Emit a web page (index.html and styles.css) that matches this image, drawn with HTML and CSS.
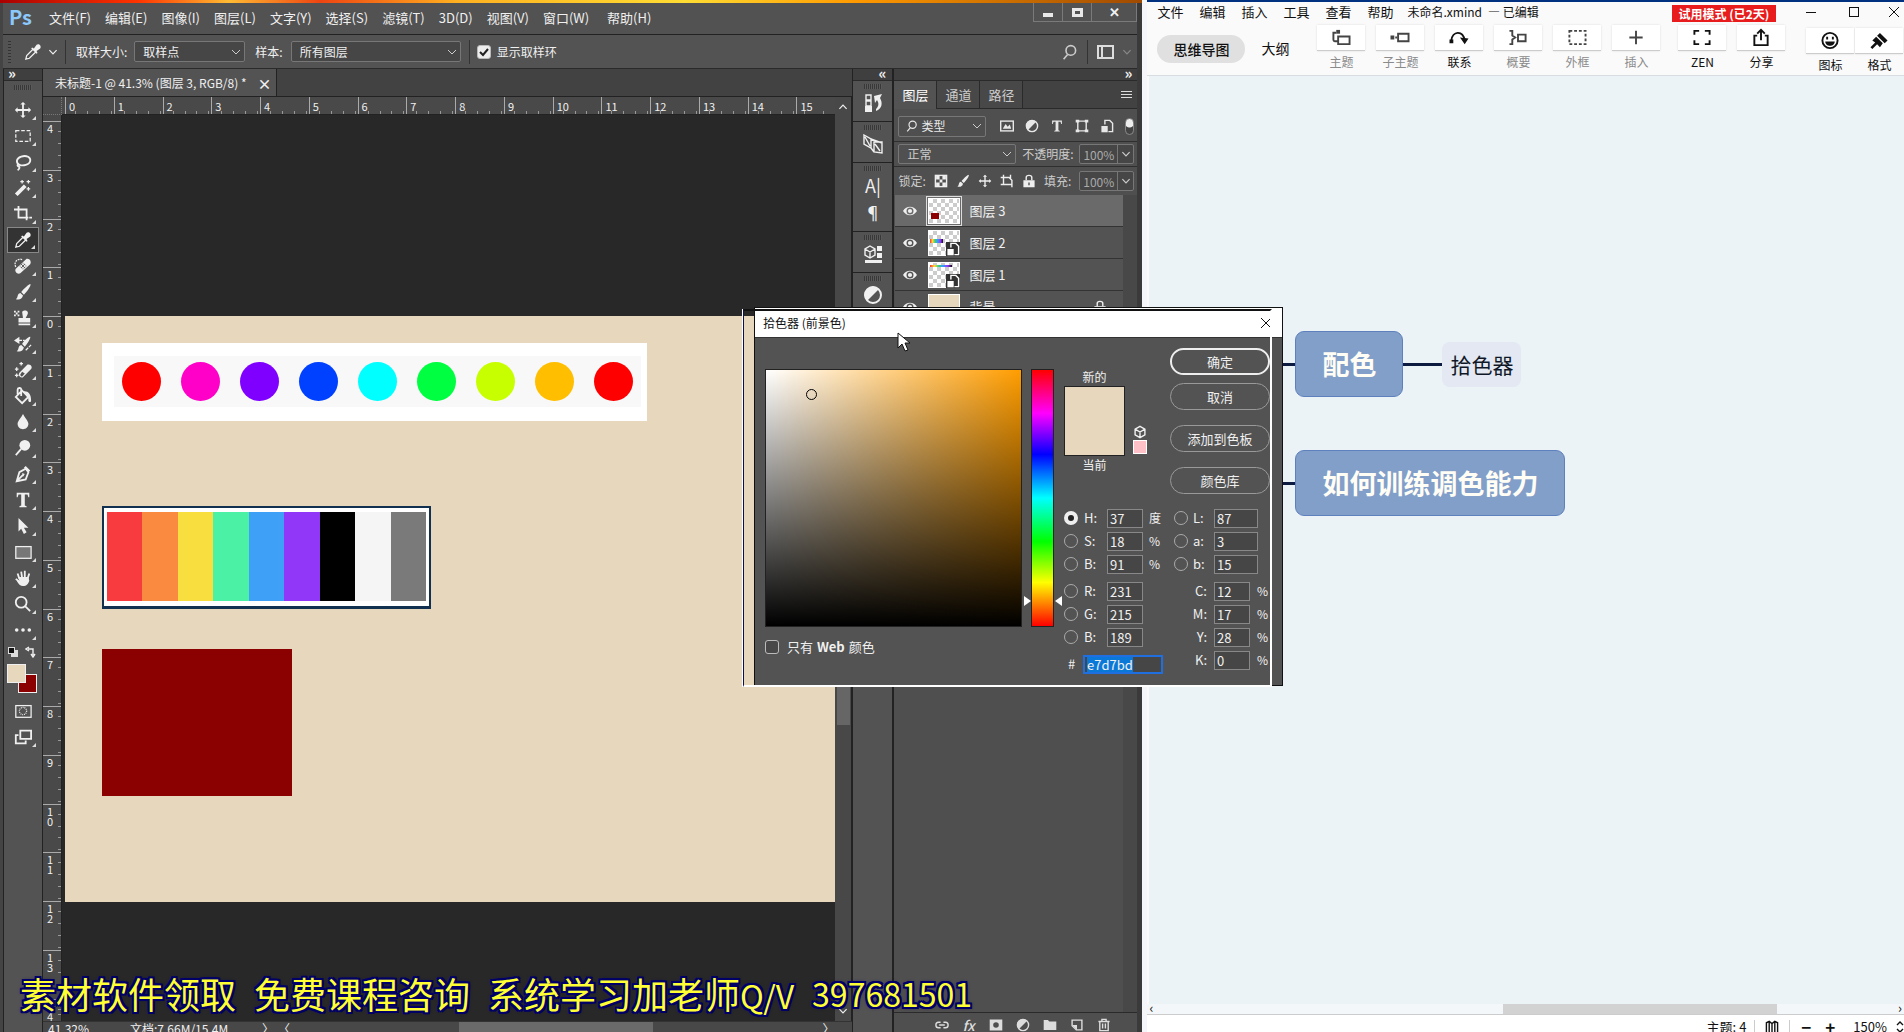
FILE: index.html
```html
<!DOCTYPE html>
<html lang="zh-CN">
<head>
<meta charset="utf-8">
<title>Ps 拾色器</title>
<link rel="stylesheet" href="styles.css">
</head>
<body>
<svg class="defs" aria-hidden="true">
  <symbol id="move" viewBox="0 0 20 20"><path class="f" d="M10 1l3 3h-2v5h5V7l3 3-3 3v-2h-5v5h2l-3 3-3-3h2v-5H4v2l-3-3 3-3v2h5V4H7z"/></symbol>
  <symbol id="marquee" viewBox="0 0 20 20"><rect class="s" x="2" y="4" width="16" height="12" stroke-dasharray="4 2"/></symbol>
  <symbol id="lasso" viewBox="0 0 20 20"><path class="s w" d="M6 13C2 11 2 6 8 4s11 1 10 5-8 6-12 4c-2-1-3 1-1 2 2 0 1 3-1 4"/></symbol>
  <symbol id="wand" viewBox="0 0 20 20"><path class="f" d="M1 16L11 6l3 3L4 19z"/><path class="s" d="M9 1v4M7 3h4M16 1v4M14 3h4M16 9v4M14 11h4"/></symbol>
  <symbol id="crop" viewBox="0 0 20 20"><path class="s w" d="M0 5h14v12M5 1v13h11M17 14h3"/></symbol>
  <symbol id="dropper" viewBox="0 0 20 20"><path class="s" d="M10 7L3 14l-1 4 4-1 7-7"/><path class="f" d="M8 6l1-1 2 1 3-4c2-2 6 1 4 4l-4 3 1 2-1 1z"/></symbol>
  <symbol id="heal" viewBox="0 0 20 20"><path class="s" d="M2 11C-1 5 5 1 9 3" stroke-dasharray="2 1"/><path class="f" fill-rule="evenodd" d="M2 13L14 2c3-1 6 3 4 6L7 18c-3 2-7-2-5-5zM6 10l4 4 4-4-4-4z"/><path class="f" d="M9 7h2v2H9zM9 11h2v2H9zM7 9h2v2H7zM11 9h2v2h-2z"/></symbol>
  <symbol id="brush" viewBox="0 0 20 20"><path class="f" d="M18 1c2 1-4 9-7 12l-3-3C11 6 17 1 18 1zM7 11l3 3c-1 4-4 5-8 4 3-2 1-6 5-7z"/></symbol>
  <symbol id="stamp" viewBox="0 0 20 20"><path class="f" d="M9 3c3-3 8-1 6 3l-2 4h5v5H5v-5h5zM5 16h13v2H5zM0 2h2v2H0zM4 2h2v2H4zM2 4h2v2H2zM0 6h2v2H0zM4 6h2v2H4z"/></symbol>
  <symbol id="history" viewBox="0 0 20 20"><path class="f" d="M18 2c1 1-3 8-6 11l-3-3c2-4 8-9 9-8zM8 11l3 3c-1 4-4 5-8 4 3-2 1-6 5-7zM0 6l6-4v8z"/><path class="s" d="M5 6h7M13 17l6-6" stroke-dasharray="4 1"/></symbol>
  <symbol id="eraser" viewBox="0 0 20 20"><path class="f" fill-rule="evenodd" d="M6 13l9-9c3-1 6 2 4 5l-9 9c-3 1-6-2-4-5zm1 2c0 2 2 3 3 1l2-2-3-2z"/><path class="s" d="M3 7v4M1 9h4M8 1v4M6 3h4M3 14v4M1 16h4"/></symbol>
  <symbol id="bucket" viewBox="0 0 20 20"><path class="s w" d="M9 4l7 7-7 7-7-7zM8 10V3c0-3-4-2-4 0v5"/><path class="f" d="M10 5c5-1 9 2 9 10 0 3-4 2-3-2z"/></symbol>
  <symbol id="drop" viewBox="0 0 20 20"><path class="f" d="M10 1c2 4 6 8 6 11 0 8-12 8-12 0 0-3 4-7 6-11z"/></symbol>
  <symbol id="dodge" viewBox="0 0 20 20"><circle class="f" cx="12" cy="7" r="6"/><path class="s w" d="M8 11l-6 7"/></symbol>
  <symbol id="pen" viewBox="0 0 20 20"><path class="s w" d="M3 18L6 8l7-4 3 4-3 8zM3 18l7-7"/><path class="f" d="M13 1l5 5-2 2-5-5zM9 9l3 1-2 3z"/></symbol>
  <symbol id="type" viewBox="0 0 20 20"><path class="f" d="M3 2h14v5h-1l-1-3h-3v12l2 1v1H6v-1l2-1V4H5L4 7H3z"/></symbol>
  <symbol id="arrow" viewBox="0 0 20 20"><path class="f" d="M5 1l11 11h-5l3 5-3 2-3-6-3 3z"/></symbol>
  <symbol id="rect" viewBox="0 0 20 20"><rect x="2" y="4" width="17" height="13" fill="#777"/><rect class="s" x="2" y="4" width="17" height="13"/></symbol>
  <symbol id="hand" viewBox="0 0 20 20"><path class="s w" d="M6 11L4 5M9 10L8 3M12 10V2M15 11l2-6M7 15l-5-4"/><path class="f" d="M5 9h11l1 4c-1 3-3 6-7 6-3 0-5-2-7-6l3 1z"/></symbol>
  <symbol id="zoom" viewBox="0 0 20 20"><circle class="s w" cx="8" cy="8" r="6"/><path class="s w" d="M12 12l6 6"/></symbol>
  <symbol id="dots" viewBox="0 0 20 20"><circle class="f" cx="3" cy="10" r="2"/><circle class="f" cx="10" cy="10" r="2"/><circle class="f" cx="17" cy="10" r="2"/></symbol>
  <symbol id="mask" viewBox="0 0 20 20"><rect class="s" x="2" y="4" width="17" height="13"/><circle class="s" cx="10" cy="10" r="4" stroke-dasharray="1 1"/></symbol>
  <symbol id="screens" viewBox="0 0 20 20"><path class="s w" d="M7 3h12v9H7zM5 8H2v9h11v-3"/></symbol>
  <symbol id="down" viewBox="0 0 20 20"><path class="s w" d="M4 7l6 6 6-6"/></symbol>
  <symbol id="search" viewBox="0 0 20 20"><circle class="s w" cx="11" cy="8" r="6"/><path class="s w" d="M7 13l-5 6"/></symbol>
  <symbol id="eye" viewBox="0 0 20 20"><path class="f" fill-rule="evenodd" d="M0 10c5-8 15-8 20 0-5 8-15 8-20 0zm10-5a5 5 0 100 10 5 5 0 000-10z"/><circle class="f" cx="10" cy="10" r="3"/></symbol>
  <symbol id="pic" viewBox="0 0 20 20"><rect class="s w" x="1" y="3" width="18" height="14"/><path class="f" d="M4 14l4-7 3 4 3-3 2 6z"/></symbol>
  <symbol id="half" viewBox="0 0 20 20"><circle class="s w" cx="10" cy="10" r="8"/><path class="f" d="M16 4A8 8 0 104 16z"/></symbol>
  <symbol id="shape" viewBox="0 0 20 20"><path class="s w" d="M4 3h12v14H4z"/><path class="f" d="M1 1h5v4H1zM14 1h5v4h-5zM1 15h5v4H1zM14 15h5v4h-5z"/></symbol>
  <symbol id="smart" viewBox="0 0 20 20"><path class="s w" d="M7 8V2h7l4 4v12h-6"/><path class="f" d="M2 10h9v9H2z"/></symbol>
  <symbol id="checker" viewBox="0 0 20 20"><rect class="s w" x="2" y="2" width="16" height="16"/><path class="f" d="M3 3h5v5H3zM12 3h5v5h-5zM8 8h4v4H8zM3 12h5v5H3zM12 12h5v5h-5z"/></symbol>
  <symbol id="artb" viewBox="0 0 20 20"><path class="s w" d="M1 5h12l4 4v6H5V1M15 1v5M17 15v4M1 15h4"/></symbol>
  <symbol id="lock" viewBox="0 0 20 20"><path class="f" fill-rule="evenodd" d="M2 9h16v10H2zm7 3v4h2v-4z"/><path class="s w" d="M6 9V5c0-4 8-4 8 0v4"/></symbol>
  <symbol id="link" viewBox="0 0 20 20"><path class="s w" d="M8 6H5c-5 0-5 8 0 8h3M12 6h3c5 0 5 8 0 8h-3M6 10h8"/></symbol>
  <symbol id="folder" viewBox="0 0 20 20"><path class="f" d="M1 3h6l2 2h10v12H1z"/></symbol>
  <symbol id="newl" viewBox="0 0 20 20"><path class="s w" d="M3 3h14v14h-8l-6-6z"/><path class="f" d="M3 10h7v7z"/></symbol>
  <symbol id="trash" viewBox="0 0 20 20"><path class="s w" d="M2 5h16M7 4V2h6v2M4 5v13h12V5M8 8v7M12 8v7"/></symbol>
  <symbol id="maskb" viewBox="0 0 20 20"><path class="f" fill-rule="evenodd" d="M1 2h18v16H1zm9 4a4 4 0 100 8 4 4 0 000-8z"/></symbol>
  <symbol id="hist" viewBox="0 0 20 20"><path class="s" d="M3 2h5v5H3zM3 8h5v5H3z"/><path class="f" d="M2 13h7v6H2zM11 3l8-2-2 4c3 5 2 11-4 13v-2c3-3 3-6 1-9l-2 3z"/></symbol>
  <symbol id="swap" viewBox="0 0 20 20"><path class="s" d="M1 1l7 4v9l-7-4zM11 8h8v11l-8-1zM12 10l5 7M2 3l5 9M8 5l11 4M8 14l3 4"/></symbol>
  <symbol id="lib" viewBox="0 0 20 20"><path class="s" d="M7 2l5 3v6l-5 3-5-3V5zM2 5l5 3 5-3M7 8v6"/><path class="f" d="M14 2h5v5h-5zM14 9h5v5h-5zM2 16h17v3H2z"/></symbol>
  <symbol id="cube" viewBox="0 0 20 20"><path class="s w" d="M10 2l7 4v8l-7 4-7-4V6zM3 6l7 4 7-4M10 10v8"/></symbol>
  <symbol id="topic" viewBox="0 0 20 20"><path class="s w" d="M7 9h12v8H7zM2 4v8c0 2 1 2 4 2M2 5h3"/><path class="f" d="M5 2h4v4H5z"/></symbol>
  <symbol id="subtopic" viewBox="0 0 20 20"><path class="s w" d="M8 6h11v8H8z"/><path class="f" d="M0 8h4v4H0zM5 9h2v2H5z"/></symbol>
  <symbol id="relate" viewBox="0 0 20 20"><path class="s w" d="M2 13C3 3 14 2 16 13"/><path class="f" d="M0 12h4v4H0zM11 10l9 1-4 6z"/></symbol>
  <symbol id="summary" viewBox="0 0 20 20"><path class="s w" d="M1 3h3v5l3 2-3 2v5H1M10 7h8v7h-8z"/></symbol>
  <symbol id="bound" viewBox="0 0 20 20"><rect class="s w" x="2" y="3" width="17" height="14" stroke-dasharray="3 2"/></symbol>
  <symbol id="plus" viewBox="0 0 20 20"><path class="s w" d="M10 3v14M3 10h14"/></symbol>
  <symbol id="zen" viewBox="0 0 20 20"><path class="s w" d="M2 7V3h5M13 3h5v4M18 13v4h-5M7 17H2v-4"/></symbol>
  <symbol id="share" viewBox="0 0 20 20"><path class="s w" d="M6 8H3v10h14V8h-3M10 13V2M6 6l4-4 4 4"/></symbol>
  <symbol id="smile" viewBox="0 0 20 20"><circle class="s w" cx="10" cy="10" r="8"/><path class="f" d="M6 6h2v3H6zM12 6h2v3h-2zM5 11h10c0 6-10 6-10 0z"/></symbol>
  <symbol id="paint" viewBox="0 0 20 20"><path class="f" d="M11 2l8 8-3 3-8-8zM7 6l7 7-3 4-3-3-5 5-2-2 5-5-3-2z"/></symbol>
  <symbol id="book" viewBox="0 0 20 20"><path class="s w" d="M2 18V4l4-2 4 3 4-3 4 2v14M10 5v13M6 3v15M14 3v15"/></symbol>
</svg>

<div class="desktop">
<main class="ps">
  <header class="menubar">
    <span class="logo">Ps</span>
    <nav class="menus"><a href="#">文件(F)</a><a href="#">编辑(E)</a><a href="#">图像(I)</a><a href="#">图层(L)</a><a href="#">文字(Y)</a><a href="#">选择(S)</a><a href="#">滤镜(T)</a><a href="#">3D(D)</a><a href="#">视图(V)</a><a href="#">窗口(W)</a><a href="#">帮助(H)</a></nav>
    <div class="winbtns"><button aria-label="最小化"><i class="g-min"></i></button><button aria-label="最大化"><i class="g-max"></i></button><button aria-label="关闭">✕</button></div>
  </header>

  <div class="options">
    <i class="vgrip"></i>
    <svg class="i20"><use href="#dropper"/></svg>
    <svg class="i12"><use href="#down"/></svg>
    <i class="vsep"></i>
    <label for="size">取样大小:</label>
    <select id="size" class="sel size"><option>取样点</option></select>
    <label for="sample">样本:</label>
    <select id="sample" class="sel sample"><option>所有图层</option></select>
    <i class="vsep"></i>
    <label class="ring"><input type="checkbox" checked>显示取样环</label>
    <span class="grow"></span>
    <svg class="i16 dim"><use href="#search"/></svg>
    <i class="vsep"></i>
    <i class="workspace"></i>
    <svg class="i12 faint"><use href="#down"/></svg>
  </div>

  <div class="work">
    <aside class="tools">
      <div class="dockhead"><span>»</span></div>
      <i class="hgrip"></i>
      <button aria-label="移动"><svg><use href="#move"/></svg></button>
      <button aria-label="选框"><svg><use href="#marquee"/></svg></button>
      <button aria-label="套索"><svg><use href="#lasso"/></svg></button>
      <button aria-label="魔棒"><svg><use href="#wand"/></svg></button>
      <button aria-label="裁剪"><svg><use href="#crop"/></svg></button>
      <button aria-label="吸管" class="on"><svg><use href="#dropper"/></svg></button>
      <button aria-label="修复"><svg><use href="#heal"/></svg></button>
      <button aria-label="画笔"><svg><use href="#brush"/></svg></button>
      <button aria-label="图章"><svg><use href="#stamp"/></svg></button>
      <button aria-label="历史画笔"><svg><use href="#history"/></svg></button>
      <button aria-label="橡皮擦"><svg><use href="#eraser"/></svg></button>
      <button aria-label="油漆桶"><svg><use href="#bucket"/></svg></button>
      <button aria-label="模糊"><svg><use href="#drop"/></svg></button>
      <button aria-label="减淡"><svg><use href="#dodge"/></svg></button>
      <button aria-label="钢笔"><svg><use href="#pen"/></svg></button>
      <button aria-label="文字"><svg><use href="#type"/></svg></button>
      <button aria-label="路径选择"><svg><use href="#arrow"/></svg></button>
      <button aria-label="矩形"><svg><use href="#rect"/></svg></button>
      <button aria-label="抓手"><svg><use href="#hand"/></svg></button>
      <button aria-label="缩放"><svg><use href="#zoom"/></svg></button>
      <button aria-label="更多"><svg><use href="#dots"/></svg></button>
      <div class="colorset">
        <i class="mini"></i>
        <svg class="flip" viewBox="0 0 12 12"><path class="s" d="M3 3h5v6M4 1L1 3l3 2M6 8l2 3 2-3"/></svg>
        <i class="bg"></i><i class="fg"></i>
      </div>
      <button aria-label="快速蒙版" class="plain"><svg><use href="#mask"/></svg></button>
      <button aria-label="屏幕模式"><svg><use href="#screens"/></svg></button>
    </aside>

    <section class="doc">
      <div class="tabs"><div class="tab"><span>未标题-1 @ 41.3% (图层 3, RGB/8) *</span><b>×</b></div></div>
      <i class="corner"></i>
      <div class="hruler"><span>0</span><span>1</span><span>2</span><span>3</span><span>4</span><span>5</span><span>6</span><span>7</span><span>8</span><span>9</span><span>10</span><span>11</span><span>12</span><span>13</span><span>14</span><span class="part">15</span></div>
      <div class="vscroll"><svg class="i12 up"><use href="#down"/></svg><i class="thumb"></i><svg class="i12"><use href="#down"/></svg></div>
      <div class="vruler"><span>4</span><span>3</span><span>2</span><span>1</span><span>0</span><span>1</span><span>2</span><span>3</span><span>4</span><span>5</span><span>6</span><span>7</span><span>8</span><span>9</span><span>1<br>0</span><span>1<br>1</span><span>1<br>2</span><span>1<br>3</span><span class="part">1<br>4</span></div>
      <div class="canvas">
        <div class="artboard">
          <div class="wheel"><div><i class="c1"></i><i class="c2"></i><i class="c3"></i><i class="c4"></i><i class="c5"></i><i class="c6"></i><i class="c7"></i><i class="c8"></i><i class="c1"></i></div></div>
          <div class="palette"><i class="p1"></i><i class="p2"></i><i class="p3"></i><i class="p4"></i><i class="p5"></i><i class="p6"></i><i class="p7"></i><i class="p8"></i><i class="p9"></i></div>
          <div class="red"></div>
        </div>
      </div>
      <footer class="status"><span class="pct">41.32%</span><span class="size">文档:7.66M/15.4M</span><span class="more">〉</span><span class="back">〈</span><i></i><span>〉</span></footer>
    </section>

    <aside class="icondock">
      <div class="dockhead"><span>«</span></div>
      <div class="cell"><i class="hgrip"></i><svg class="i20"><use href="#hist"/></svg></div>
      <div class="cell"><i class="hgrip"></i><svg class="i20"><use href="#swap"/></svg></div>
      <div class="cell tall"><i class="hgrip"></i><span>A|</span><span>¶</span></div>
      <div class="cell"><i class="hgrip"></i><svg class="i20"><use href="#lib"/></svg></div>
      <div class="cell last"><i class="hgrip"></i><svg class="i20"><use href="#half"/></svg></div>
    </aside>

    <aside class="layers">
      <div class="dockhead end"><span>»</span></div>
      <div class="ptabs"><button class="on">图层</button><button>通道</button><button>路径</button><i class="burger"></i></div>
      <div class="filter">
        <label class="kind"><svg class="i12"><use href="#search"/></svg><select class="sel" aria-label="类型"><option>类型</option></select></label>
        <svg class="i14"><use href="#pic"/></svg><svg class="i14"><use href="#half"/></svg><svg class="i14"><use href="#type"/></svg><svg class="i14"><use href="#shape"/></svg><svg class="i14"><use href="#smart"/></svg>
        <i class="toggle"></i>
      </div>
      <div class="blend">
        <select class="sel mode" aria-label="混合模式"><option>正常</option></select>
        <label for="opa">不透明度:</label>
        <span class="num"><input id="opa" value="100%"><svg class="i12"><use href="#down"/></svg></span>
      </div>
      <div class="locks">
        <span>锁定:</span>
        <svg class="i14"><use href="#checker"/></svg><svg class="i14"><use href="#brush"/></svg><svg class="i14"><use href="#move"/></svg><svg class="i14"><use href="#artb"/></svg><svg class="i14"><use href="#lock"/></svg>
        <label for="fill">填充:</label>
        <span class="num"><input id="fill" value="100%"><svg class="i12"><use href="#down"/></svg></span>
      </div>
      <ul>
        <li class="on"><svg class="i14"><use href="#eye"/></svg><i class="th t3"></i><span>图层 3</span></li>
        <li><svg class="i14"><use href="#eye"/></svg><i class="th t2"><svg class="i14"><use href="#smart"/></svg></i><span>图层 2</span></li>
        <li><svg class="i14"><use href="#eye"/></svg><i class="th t1"><svg class="i14"><use href="#smart"/></svg></i><span>图层 1</span></li>
        <li><svg class="i14"><use href="#eye"/></svg><i class="th t0"></i><span>背景</span><svg class="i14 lk"><use href="#lock"/></svg></li>
      </ul>
      <footer><svg class="i14"><use href="#link"/></svg><em>fx</em><svg class="i14"><use href="#maskb"/></svg><svg class="i14"><use href="#half"/></svg><svg class="i14"><use href="#folder"/></svg><svg class="i14"><use href="#newl"/></svg><svg class="i14"><use href="#trash"/></svg></footer>
    </aside>
  </div>
</main>

<section class="xmind">
  <header>
    <div class="xmenu"><a href="#">文件</a><a href="#">编辑</a><a href="#">插入</a><a href="#">工具</a><a href="#">查看</a><a href="#">帮助</a><span class="name">未命名.xmind</span><span class="edited">— 已编辑</span><span class="trial">试用模式 (已2天)</span><button class="wb" aria-label="最小化"><i class="x-min"></i></button><button class="wb" aria-label="最大化"><i class="x-max"></i></button><button class="wb x" aria-label="关闭"><svg class="i12" viewBox="0 0 12 12"><path d="M1 1l10 10M11 1L1 11" stroke="currentColor"/></svg></button></div>
    <div class="xbar">
      <button class="pill">思维导图</button><button class="outline">大纲</button>
      <button class="tb off"><svg><use href="#topic"/></svg>主题</button>
      <button class="tb off"><svg><use href="#subtopic"/></svg>子主题</button>
      <button class="tb"><svg><use href="#relate"/></svg>联系</button>
      <button class="tb off"><svg><use href="#summary"/></svg>概要</button>
      <button class="tb off"><svg><use href="#bound"/></svg>外框</button>
      <button class="tb off"><svg><use href="#plus"/></svg>插入</button>
      <button class="tb zen"><svg><use href="#zen"/></svg>ZEN</button>
      <button class="tb"><svg><use href="#share"/></svg>分享</button>
      <div class="pair"><button class="tb"><svg><use href="#smile"/></svg>图标</button><button class="tb"><svg><use href="#paint"/></svg>格式</button></div>
    </div>
  </header>
  <div class="map">
    <i class="line l1"></i><i class="line l2"></i><i class="line l3"></i>
    <div class="node n1">配色</div><div class="leaf">拾色器</div><div class="node n2">如何训练调色能力</div>
  </div>
  <div class="xscroll"><span>‹</span><i></i><span>›</span></div>
  <footer class="xstatus"><span>主题: 4</span><i></i><svg class="i20"><use href="#book"/></svg><i></i><button aria-label="缩小">−</button><button aria-label="放大">+</button><span class="pc">150%</span><svg class="ud" viewBox="0 0 8 14"><path class="s" d="M1 5l3-3 3 3M1 9l3 3 3-3"/></svg></footer>
</section>
</div>

<form class="dialog">
  <div class="title"><span>拾色器 (前景色)</span><button type="button" aria-label="关闭"><svg class="i12" viewBox="0 0 12 12"><path d="M1 1l10 10M11 1L1 11" stroke="currentColor"/></svg></button></div>
  <div class="body">
    <div class="left">
      <div class="spectrum"><i></i></div>
      <label class="web"><input type="checkbox">只有 <b>Web</b> 颜色</label>
    </div>
    <div class="hue"><i></i><i class="r"></i></div>
    <div class="right">
      <div class="upper">
        <div class="preview"><span>新的</span><i></i><span>当前</span></div>
        <div class="warn"><svg class="i14"><use href="#cube"/></svg><i></i></div>
        <div class="btns"><button type="button" class="ok">确定</button><button type="button">取消</button><button type="button" class="gap">添加到色板</button><button type="button" class="gap">颜色库</button></div>
      </div>
      <div class="values">
        <div class="col">
          <div><input type="radio" name="ch" id="rh" checked><label for="rh">H:</label><input class="v" aria-label="H" value="37"><span>度</span></div>
          <div><input type="radio" name="ch" id="rs"><label for="rs">S:</label><input class="v" aria-label="S" value="18"><span>%</span></div>
          <div><input type="radio" name="ch" id="rv"><label for="rv">B:</label><input class="v" aria-label="B" value="91"><span>%</span></div>
          <div class="sp"><input type="radio" name="ch" id="rr"><label for="rr">R:</label><input class="v" aria-label="R" value="231"></div>
          <div><input type="radio" name="ch" id="rg"><label for="rg">G:</label><input class="v" aria-label="G" value="215"></div>
          <div><input type="radio" name="ch" id="rb"><label for="rb">B:</label><input class="v" aria-label="蓝" value="189"></div>
          <div class="sp hex"><label for="hex">#</label><input class="v" id="hex" value="e7d7bd"></div>
        </div>
        <div class="col two">
          <div><input type="radio" name="ch" id="rl"><label for="rl">L:</label><input class="v wide" aria-label="L" value="87"></div>
          <div><input type="radio" name="ch" id="ra"><label for="ra">a:</label><input class="v wide" aria-label="a" value="3"></div>
          <div><input type="radio" name="ch" id="rlb"><label for="rlb">b:</label><input class="v wide" aria-label="b" value="15"></div>
          <div class="sp"><label for="ic">C:</label><input class="v" id="ic" value="12"><span>%</span></div>
          <div><label for="im">M:</label><input class="v" id="im" value="17"><span>%</span></div>
          <div><label for="iy">Y:</label><input class="v" id="iy" value="28"><span>%</span></div>
          <div><label for="ik">K:</label><input class="v" id="ik" value="0"><span>%</span></div>
        </div>
      </div>
    </div>
  </div>
</form>
<div class="ghost"></div>
<svg class="cursor" viewBox="0 0 14 20"><path d="M1 1v15l4-4 3 7 3-1-3-7h5z"/></svg>
<div class="caption"><span>素材软件领取</span><span>免费课程咨询</span><span>系统学习加老师<small>Q/V</small></span><small>397681501</small></div>
</body>
</html>
```
FILE: styles.css
```css
* { box-sizing: border-box; }
body { margin: 0; font: 13px/16px "Noto Sans CJK SC", sans-serif; color: #f0f0f0; overflow: hidden; background: #4f4f4f; }
button, input, select { font: inherit; color: inherit; margin: 0; padding: 0; border: 0; background: none; border-radius: 0; }
a { color: inherit; text-decoration: none; }
i { display: block; font-style: normal; flex: none; }
svg { flex: none; display: block; }
.defs { position: absolute; width: 0; height: 0; }
.s { fill: none; stroke: currentColor; stroke-width: 1.4; }
.w { stroke-width: 2; }
.f { fill: currentColor; }
.i20 { width: 20px; height: 20px; }
.i16 { width: 16px; height: 16px; }
.i14 { width: 14px; height: 14px; }
.i12 { width: 12px; height: 12px; }
.dim { color: #ccc; }
.faint { color: #888; }
.grow { flex: 1; }

.desktop { display: grid; grid-template-columns: 3fr 2fr; height: 100vh; }
.ps { display: flex; flex-direction: column; min-width: 0; min-height: 0; background: #4f4f4f; border-right: 5px solid #3a3a3a; border-left: 3px solid #444; white-space: nowrap; }
.ps::before { content: ""; height: 3px; margin: 0 -5px 0 -3px; background: linear-gradient(90deg, #a00, #f30 12%, #fb3 20%, #e41 28%, #ffb020 40%, #fd3 60%, #f90 75%, #a04a00); flex: none; }

.menubar { display: flex; height: 31px; align-items: center; padding-left: 6px; background: #525252; flex: none; }
.logo { font: bold 20px/24px "Noto Sans CJK SC", sans-serif; color: #8cc8fa; width: 40px; margin-top: -4px; }
.menus { display: flex; gap: 14px; flex: 1; margin-top: -1px; }
.menus a:nth-child(10) { margin-right: 4px; }
.winbtns { display: flex; align-self: flex-start; height: 19px; border: 1px solid #7a7a7a; border-top: 0; }
.winbtns button { width: 29px; display: grid; place-items: center; border-right: 1px solid #7a7a7a; line-height: 18px; }
.winbtns button:last-child { width: 44px; border: 0; font-weight: bold; }
.g-min { width: 10px; height: 4px; background: #e8e8e8; margin-top: 6px; }
.g-max { width: 11px; height: 9px; border: 3px solid #e8e8e8; }

.options { display: flex; align-items: center; height: 35px; border-top: 1px solid #222; border-bottom: 1px solid #2a2a2a; padding: 0 4px 0 5px; font-size: 12px; flex: none; background: #535353; }
.options label { margin: 0 5px 0 10px; }
.options .i20 { width: 18px; height: 18px; margin: 0 5px 0 13px; }
.options .i12 { margin-right: 6px; }
.vgrip { width: 3px; height: 22px; background: repeating-linear-gradient(#333 0 1px, #555 1px 3px); }
.vsep { width: 1px; height: 24px; background: #333; }
.sel { appearance: none; border: 1px solid #777; border-radius: 2px; height: 21px; padding: 0 8px; background: #464646 url("data:image/svg+xml,%3Csvg xmlns='http://www.w3.org/2000/svg' width='10' height='8'%3E%3Cpath d='M1 2l4 4 4-4' fill='none' stroke='%23ccc'/%3E%3C/svg%3E") no-repeat right 3px center; }
.options .sel.size { width: 111px; margin-left: 2px; }
.options .sel.sample { width: 170px; margin: 0 8px 0 3px; }
.options .ring { display: flex; align-items: center; gap: 6px; margin-left: 7px; }
.ring input, .web input { appearance: none; width: 14px; height: 14px; border: 1px solid #bbb; border-radius: 3px; }
.ring input { background: #eee url("data:image/svg+xml,%3Csvg xmlns='http://www.w3.org/2000/svg' width='12' height='12'%3E%3Cpath d='M2 6l3 3 5-6' fill='none' stroke='%23222' stroke-width='2'/%3E%3C/svg%3E") center; }
.options .i16 { margin-right: 9px; }
.workspace { width: 17px; height: 14px; margin: 0 7px 0 9px; border: 2px solid #ddd; background: linear-gradient(90deg, #535353 2px, #ddd 2px 4px, #535353 4px); }
.options .faint { margin-right: 0; }

.work { display: flex; flex: 1; min-height: 0; }
.dockhead { height: 12px; background: #3f3f3f; border-bottom: 1px solid #2a2a2a; font: bold 15px/8px "Noto Sans CJK SC", sans-serif; padding-left: 4px; flex: none; }
.dockhead.end { text-align: right; padding-right: 5px; }
.hgrip { width: 18px; height: 5px; margin: 3px auto; background: repeating-linear-gradient(90deg, #383838 0 1px, #5a5a5a 1px 2px); }
.tools { width: 40px; display: flex; flex-direction: column; align-items: center; border-left: 1px solid #222; border-right: 1px solid #222; background: #535353; flex: none; }
.tools .dockhead { width: 100%; }
.tools .hgrip { margin: 4px auto 7px; }
.tools button { width: 32px; height: 26px; display: grid; place-items: center; position: relative; flex: none; }
.tools button svg { width: 18px; height: 18px; }
.tools button:not(.plain)::after { content: ""; position: absolute; right: 3px; bottom: 3px; border: 2px solid #ddd; border-top-color: transparent; border-left-color: transparent; }
.tools .on { background: #333; border: 1px solid #888; }
.colorset { position: relative; width: 32px; height: 54px; margin-bottom: 1px; flex: none; }
.colorset .mini { position: absolute; left: 1px; top: 4px; width: 7px; height: 7px; background: #111; border: 1px solid #ddd; box-shadow: 3px 3px #ddd; }
.flip { position: absolute; left: 18px; top: 3px; width: 12px; height: 12px; }
.colorset .fg, .colorset .bg { position: absolute; width: 19px; height: 19px; border: 1px solid #eee; }
.colorset .fg { left: 0; top: 21px; background: #e7d7bd; }
.colorset .bg { left: 11px; top: 31px; background: #8b0000; }

.doc { flex: 1; min-width: 0; display: grid; grid-template: 28px 18px 1fr 11px / 19px 1fr 17px; background: #484848; }
.tabs { grid-column: 1 / 4; background: #424242; border-bottom: 1px solid #222; display: flex; font-size: 12px; }
.tab { display: flex; align-items: center; gap: 11px; padding: 0 10px 0 12px; background: #535353; border-right: 1px solid #222; }
.tab b { font-size: 14px; width: 8px; }
.corner { background: #4a4a4a; border: 1px dotted #777; border-width: 0 1px 1px 0; }
.hruler { display: flex; padding-left: 3px; border-bottom: 1px solid #222; background: #494949; font-size: 11px; line-height: 19px; overflow: hidden; }
.hruler span { flex: 1; min-width: 0; border-left: 1px solid #aaa; padding-left: 3px; background: repeating-linear-gradient(90deg, transparent 0 19%, #999 19% 21%, transparent 21% 25%) bottom / 100% 3px no-repeat; }
.hruler .part { flex: .78; }
.vruler { display: flex; flex-direction: column; padding-top: 6px; border-right: 1px solid #222; background: #494949; font-size: 11px; line-height: 10px; overflow: hidden; }
.vruler span { flex: 1; min-height: 0; border-top: 1px solid #aaa; padding: 1px 0 0 4px; background: repeating-linear-gradient(transparent 0 19%, #999 19% 21%, transparent 21% 25%) right / 3px 100% no-repeat; }
.vruler .part { flex: .43; }
.vscroll { grid-column: 3; grid-row: 2 / 4; display: flex; flex-direction: column; align-items: center; justify-content: space-between; background: #484848; border-right: 1px solid #222; padding: 4px 0; }
.vscroll .up { transform: rotate(180deg); }
.vscroll .thumb { width: 13px; height: 410px; background: #666; margin-bottom: 78px; }
.canvas { position: relative; background: #282828; overflow: hidden; }
.artboard { position: absolute; left: 3px; right: 0; top: 201px; height: 586px; background: #e7d7bd; }
.wheel { position: absolute; left: 37px; top: 27px; width: 545px; height: 78px; background: #fff; padding: 13px 6px 13px 12px; }
.wheel div { display: flex; justify-content: space-between; align-items: center; height: 51px; padding: 0 8px; background: #f8f8f9; }
.wheel i { width: 39px; height: 39px; border-radius: 50%; }
.c1 { background: #f00; } .c2 { background: #ff00c8; } .c3 { background: #8000ff; } .c4 { background: #0040ff; }
.c5 { background: #0ff; } .c6 { background: #00ff40; } .c7 { background: #c8ff00; } .c8 { background: #ffbf00; }
.palette { position: absolute; left: 37px; top: 190px; width: 329px; height: 103px; border: 2px solid #12304f; border-bottom-width: 3px; background: #fff; padding: 4px 3px 5px; display: flex; }
.palette i { flex: 1; }
.p1 { background: #f83b3f; } .p2 { background: #f98a3f; } .p3 { background: #f8de3f; } .p4 { background: #4bf2a5; }
.p5 { background: #3fa0f7; } .p6 { background: #9137f8; } .p7 { background: #000; } .p8 { background: #f5f5f5; } .p9 { background: #7a7a7a; }
.red { position: absolute; left: 37px; top: 333px; width: 190px; height: 147px; background: #8b0000; }
.status { grid-column: 1 / 4; display: flex; border-top: 1px solid #333; overflow: hidden; font-size: 12px; line-height: 14px; padding: 0 18px 0 5px; background: #484848; }
.status .pct { width: 82px; }
.status .size { width: 132px; }
.status span { flex: none; }
.status .more { width: 16px; }
.status .back { flex: 1; }
.status i { width: 194px; background: #6a6a6a; margin-right: 169px; }

.icondock { width: 42px; border: 1px solid #222; border-width: 0 2px 0 1px; background: #535353; flex: none; }
.icondock .dockhead { text-align: right; padding-right: 6px; }
.cell { height: 41px; border-bottom: 1px solid #222; display: flex; flex-direction: column; align-items: center; gap: 4px; }
.cell .hgrip { margin: 3px 0 0; }
.cell.tall { height: 69px; gap: 1px; }
.cell span { font-size: 18px; line-height: 26px; }
.cell.last { border: 0; }

.layers { width: 243px; display: flex; flex-direction: column; background: #4f4f4f; font-size: 12px; flex: none; }
.ptabs { display: flex; height: 28px; background: #424242; border-bottom: 1px solid #2a2a2a; font-size: 13px; align-items: stretch; }
.ptabs button { width: 43px; border-right: 1px solid #2a2a2a; color: #ccc; background: #484848; }
.ptabs .on { background: #535353; color: #fff; margin-bottom: -1px; }
.burger { width: 11px; height: 9px; margin: 10px 5px 0 auto; background: repeating-linear-gradient(#ddd 0 1px, transparent 1px 3px); }
.filter, .blend, .locks { display: flex; align-items: center; border-bottom: 1px solid #2f2f2f; padding: 0 3px 0 4px; color: #ccc; flex: none; }
.filter { height: 33px; padding-top: 2px; color: #e8e8e8; justify-content: space-between; }
.kind { display: flex; align-items: center; width: 88px; height: 21px; border: 1px solid #777; border-radius: 2px; padding-left: 7px; margin-right: 2px; }
.kind .sel { border: 0; height: 19px; background-color: transparent; flex: 1; min-width: 0; padding: 0 3px; }
.toggle { width: 9px; height: 17px; border: 1px solid #888; border-radius: 5px; background: radial-gradient(circle at 50% 4px, #eee 4px, #444 5px); }
.blend { height: 25px; justify-content: space-between; }
.mode { width: 118px; height: 20px; background-color: #505050; }
.num { display: flex; align-items: center; width: 55px; height: 20px; border: 1px solid #777; border-radius: 2px; background: #464646; }
.num input { width: 38px; padding-left: 3px; border-right: 1px solid #777; height: 18px; color: #aaa; }
.num svg { margin-left: 2px; }
.locks { height: 28px; justify-content: space-between; border: 0; }
.locks .i14 { color: #eee; }
.layers ul { list-style: none; margin: 0; padding: 0 14px 0 1px; flex: 1; min-height: 0; font-size: 13px; background: linear-gradient(90deg, transparent 229px, #484848 229px); }
.layers li { display: flex; align-items: center; height: 32px; border-bottom: 1px solid #333; background: #535353; padding-left: 8px; }
.layers li.on { background: #6a6a6a; }
.th { position: relative; width: 32px; height: 26px; margin: 0 9px 0 11px; border: 1px solid #fff; background: repeating-conic-gradient(#ccc 0 25%, #fff 0 50%) 0 0 / 8px 8px; }
.t3 { outline: 1px solid #ddd; outline-offset: 1px; }
.t3::after { content: ""; position: absolute; left: 2px; bottom: 4px; width: 8px; height: 6px; background: #8b0000; }
.t2::after, .t1::after { content: ""; position: absolute; left: 1px; top: 8px; width: 13px; height: 4px; background: linear-gradient(90deg, #f33, #fd3, #3c8, #39f, #93f, #111); }
.t1::after { top: 2px; width: 22px; height: 2px; }
.th svg { position: absolute; right: -1px; bottom: -1px; color: #fff; background: #333; }
.t0 { background: #e7d7bd; }
.lk { margin-left: auto; margin-right: 16px; }
.layers footer { height: 20px; border-top: 1px solid #2a2a2a; display: flex; gap: 13px; align-items: center; padding: 4px 0 0 41px; color: #ddd; flex: none; }
.layers footer em { width: 14px; font-size: 14px; font-weight: 500; }

.xmind { display: flex; flex-direction: column; background: #fafafb; color: #111; min-width: 0; min-height: 0; overflow: hidden; white-space: nowrap; border-left: 5px solid #f4f6f9; }
.xmind header { height: 76px; border-bottom: 1px solid #d9dce0; flex: none; border-top: 2px solid #003080; }
.xmenu { display: flex; align-items: center; gap: 16px; padding-left: 10px; height: 20px; }
.xmenu .name { font-size: 12px; margin-left: -2px; }
.xmenu .edited { margin-left: -10px; font-size: 12px; }
.trial { background: #e81c1c; color: #fff; font-size: 12px; font-weight: bold; line-height: 17px; width: 104px; text-align: center; margin: 3px 0 0 auto; }
.wb { width: 27px; height: 16px; display: grid; place-items: center; }
.wb.x { width: 20px; }
.trial + .wb { margin-left: 6px; }
.x-min { width: 10px; height: 1px; background: #111; }
.x-max { width: 10px; height: 10px; border: 1px solid #111; }
.xbar { display: flex; align-items: flex-start; padding-left: 10px; }
.pill { width: 88px; height: 28px; border-radius: 14px; background: #e0e0e1; font-size: 14px; margin-top: 13px; font-weight: 500; }
.outline { width: 28px; font-size: 14px; line-height: 28px; margin: 12px 16px 0; }
.tb { width: 48px; margin-left: 11px; display: flex; flex-direction: column; align-items: center; font-size: 12px; gap: 3px; flex: none; margin-top: 3px; }
.tb svg { width: 48px; height: 26px; padding: 3px 0; background: #fff; border-bottom: 1px solid #ccc; box-shadow: 0 0 2px #ddd; }
.off { color: #8a8a8a; }
.off svg { color: #444; }
.outline + .tb { margin-left: 12px; }
.zen { margin-left: 18px; }
.pair { display: flex; margin: 6px 0 0 auto; }
.pair .tb { margin: 0; width: 49px; }
.map { position: relative; flex: 1; background: #ebf3f6; overflow: hidden; margin-left: 2px; }
.node { position: absolute; left: 146px; height: 66px; padding: 0 26px; border: 1px solid #5e80bd; border-radius: 9px; background: #829fca; color: #fffdf4; font-size: 27px; line-height: 64px; font-weight: 700; }
.n1 { top: 255px; }
.n2 { top: 374px; }
.leaf { position: absolute; left: 293px; top: 266px; height: 45px; padding: 0 8px; border-radius: 8px; background: #e3e8f2; color: #101828; font-size: 21px; line-height: 44px; }
.line { position: absolute; height: 3px; background: #0d1b40; }
.l1 { left: 100px; top: 287px; width: 46px; }
.l2 { left: 254px; top: 287px; width: 39px; }
.l3 { left: 100px; top: 406px; width: 46px; }
.xscroll { display: flex; height: 11px; line-height: 8px; justify-content: space-between; padding: 0 2px; background: #f4f7f9; border-bottom: 1px solid #ccc; flex: none; }
.xscroll i { width: 274px; background: #d2d2d3; margin-left: 343px; margin-right: 114px; }
.xstatus { height: 17px; display: flex; align-items: center; justify-content: flex-end; gap: 8px; font-size: 13px; padding: 7px 0 0; background: #fff; flex: none; }
.xstatus i { width: 1px; height: 14px; background: #ccc; }
.xstatus .i20 { width: 18px; height: 14px; }
.xstatus button { font-weight: bold; font-size: 17px; width: 16px; }
.xstatus .pc { margin: 0 1px 0 7px; }
.ud { width: 8px; height: 14px; }

.dialog { position: absolute; left: 754px; top: 307px; width: 529px; border: 1px solid #111; background: #535353; font-size: 13px; }
.title { display: flex; justify-content: space-between; height: 30px; align-items: center; background: #fff; color: #111; font-size: 12px; padding: 0 10px 0 8px; border-bottom: 1px solid #333; }
.body { display: flex; padding: 9px 12px 12px 10px; height: 347px; }
.left { margin-top: 22px; }
.spectrum { width: 257px; height: 258px; border: 1px solid #222; background: linear-gradient(transparent, #000), linear-gradient(90deg, #fff, #ff9d00); padding: 19px 0 0 40px; margin-bottom: 12px; }
.spectrum i { width: 11px; height: 11px; border: 1px solid #000; border-radius: 50%; }
.web { display: flex; align-items: center; gap: 8px; white-space: pre; }
.web b { margin: 0 -7px; }
.web input { background: #484848; }
.hue { position: relative; width: 23px; height: 258px; margin: 22px 10px 0 9px; border: 1px solid #222; background: linear-gradient(#f00, #f0f 17%, #00f 33%, #0ff 50%, #0f0 67%, #ff0 83%, #f00); }
.hue i { position: absolute; top: 226px; left: -8px; border: 5px solid transparent; border-left: 7px solid #fff; border-right: 0; }
.hue .r { left: auto; right: -9px; border-right: 7px solid #fff; border-left: 0; }
.right { flex: 1; min-width: 0; }
.upper { display: flex; height: 162px; }
.preview { width: 62px; text-align: center; padding-top: 22px; font-size: 12px; }
.preview i { height: 70px; border: 1px solid #222; background: #e7d7bd; margin: 1px 0; }
.preview span { display: block; }
.warn { width: 14px; margin: 78px 23px 0 8px; }
.warn i { width: 14px; height: 14px; background: #ffc0c8; border: 1px solid #fff; margin-top: 1px; }
.btns { display: flex; flex-direction: column; gap: 8px; flex: none; width: 100px; margin-top: 1px; }
.btns button { height: 27px; width: 100px; border: 1px solid #999; border-radius: 14px; }
.btns .ok { border: 2px solid #eee; }
.btns .gap { margin-top: 7px; }
.values { display: flex; }
.col { width: 110px; display: flex; flex-direction: column; gap: 5px; font-size: 13px; flex: none; }
.col div { display: flex; align-items: center; height: 18px; }
.col .sp { margin-top: 4px; }
.col label { width: 22px; padding-left: 6px; margin-right: 7px; flex: none; }
.col span { margin-left: 6px; font-size: 12px; }
.col input[type=radio] { appearance: none; width: 14px; height: 14px; border: 1px solid #aaa; border-radius: 50%; flex: none; }
.col input[type=radio]:checked { border: 4px solid #eee; background: #222; }
.col .v { width: 36px; height: 19px; border: 1px solid #888; background: #464646; padding-left: 2px; flex: none; }
.col .v.wide { width: 44px; }
.col.two { width: 94px; }
.col.two label { width: 14px; padding: 0; margin-left: 5px; white-space: nowrap; }
.col.two .sp label, .col.two .sp ~ div label { width: 16px; margin-left: 17px; text-align: right; }
.col.two span { margin-left: 7px; }
.col .hex label { width: 12px; margin-right: 7px; padding: 0 0 0 4px; }
.hex #hex { width: 80px; border: 2px solid #1f6fe0; background: linear-gradient(#0a78d8, #0a78d8) 2px 0 / 46px 100% no-repeat #464646; }
.ghost { position: absolute; left: 743px; top: 309px; width: 529px; height: 378px; border: 2px solid #fff; border-top-color: #111; border-left: 1px solid #0a1050; pointer-events: none; box-shadow: -1px 0 #fff; }
.cursor { position: absolute; left: 897px; top: 332px; width: 14px; height: 20px; fill: #fff; stroke: #111; }
.caption { position: absolute; left: 20px; bottom: 15px; display: flex; gap: 18px; font-size: 36px; line-height: 44px; color: #ff3; text-shadow: 2px 0 #006, -2px 0 #006, 0 2px #006, 0 -2px #006, 2px 2px #006, -2px -2px #006, 2px -2px #006, -2px 2px #006, 0 0 4px #006; white-space: nowrap; }
.caption small { font-size: 32px; }
```
